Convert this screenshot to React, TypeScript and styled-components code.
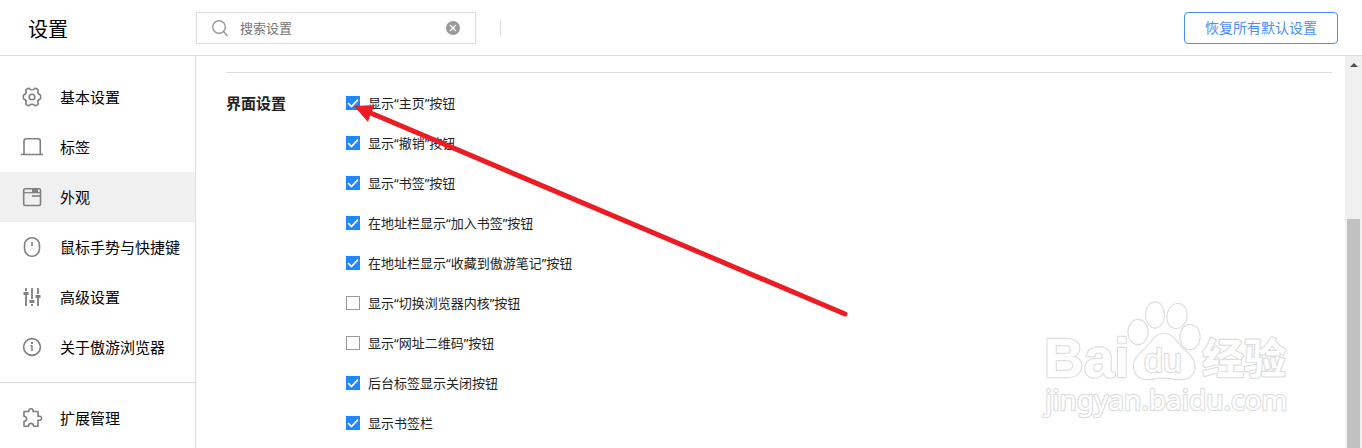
import React from 'react';
import styled, { createGlobalStyle } from 'styled-components';

const Global = createGlobalStyle`
  *, *::before, *::after { box-sizing: border-box; }
  body {
    margin: 0;
    background: #fff;
    color: #222;
    font-family: "Noto Sans", "Noto Sans CJK SC", sans-serif;
  }
  button, input { font: inherit; }
`;

const Page = styled.div`
  position: relative;
  display: flex;
  flex-direction: column;
  height: 100vh;
  overflow: hidden;
`;

const Header = styled.header`
  display: flex;
  align-items: center;
  flex: none;
  height: 56px;
  padding: 0 24px 0 28px;
  border-bottom: 1px solid #dcdcdc;
`;

const Title = styled.h1`
  width: 168px;
  margin: 0;
  padding-top: 4px;
  font-size: 20px;
  line-height: 32px;
  font-weight: 400;
  color: #000;
`;

const Search = styled.div`
  display: flex;
  align-items: center;
  width: 280px;
  height: 32px;
  padding: 0 15px 0 14px;
  border: 1px solid #dcdcdc;
`;

const SearchInput = styled.input`
  flex: 1;
  min-width: 0;
  margin: 0 12px 0 11px;
  padding: 0;
  border: 0;
  outline: 0;
  background: none;
  font-size: 13px;
  line-height: 20px;
  &::placeholder { color: #757575; opacity: 1; }
`;

const ClearButton = styled.button`
  display: flex;
  padding: 0;
  border: 0;
  background: none;
  cursor: pointer;
`;

const Separator = styled.span`
  width: 1px;
  height: 16px;
  margin-left: 24px;
  background: #dcdcdc;
`;

const ResetButton = styled.button`
  width: 154px;
  height: 32px;
  margin-left: auto;
  padding: 0;
  border: 1px solid #4a90f4;
  border-radius: 4px;
  background: #fff;
  color: #4a90f4;
  font-size: 14px;
  line-height: 20px;
  cursor: pointer;
`;

const Body = styled.div`
  display: flex;
  flex: 1;
  min-height: 0;
`;

const Sidebar = styled.nav`
  flex: none;
  width: 196px;
  padding-top: 16px;
  border-right: 1px solid #dcdcdc;
`;

const NavLink = styled.a<{ $active?: boolean }>`
  display: flex;
  align-items: center;
  gap: 16px;
  height: 50px;
  padding-left: 20px;
  background: ${(p) => (p.$active ? '#f0f0f0' : 'transparent')};
  color: #000;
  font-size: 15px;
  line-height: 24px;
  text-decoration: none;
  white-space: nowrap;
`;

const NavDivider = styled.hr`
  margin: 10px 0;
  border: 0;
  border-top: 1px solid #dcdcdc;
`;

const Content = styled.main`
  flex: 1;
  min-width: 0;
  padding: 16px 13px 0 30px;
  overflow: hidden;
`;

const Section = styled.section`
  display: flex;
  padding-top: 10px;
  border-top: 1px solid #dcdcdc;
`;

const SectionTitle = styled.h2`
  width: 120px;
  margin: 0;
  font-size: 15px;
  line-height: 40px;
  font-weight: 700;
`;

const Option = styled.label`
  display: flex;
  align-items: center;
  gap: 8px;
  height: 40px;
  font-size: 13px;
  line-height: 20px;
  white-space: nowrap;
`;

const CheckFrame = styled.span`
  display: grid;
  & > * { grid-area: 1 / 1; }
`;

const CheckInput = styled.input`
  appearance: none;
  width: 14px;
  height: 14px;
  margin: 0;
  border: 1px solid #999;
  background: #fff;
  &:checked { border-color: #1e88ff; background: #1e88ff; }
`;

const CheckMark = styled.svg`
  pointer-events: none;
  z-index: 1;
`;

const ScrollTrack = styled.div`
  display: flex;
  flex-direction: column;
  align-items: center;
  flex: none;
  width: 17px;
  background: #f0f0f0;
`;

const ScrollUp = styled.span`
  display: flex;
  align-items: center;
  height: 18px;
`;

const ScrollGap = styled.span`
  height: 37%;
  flex: none;
`;

const ScrollThumb = styled.span`
  flex: 1;
  width: 13px;
  background: #c1c1c1;
`;

const Pointer = styled.svg`
  position: absolute;
  left: 346px;
  top: 95px;
  pointer-events: none;
`;

const Watermark = styled.svg`
  position: absolute;
  right: 62px;
  bottom: 18px;
  pointer-events: none;
`;

const NavIcon = ({ children }: { children: React.ReactNode }) => (
  <svg width="24" height="24" viewBox="0 0 24 24" fill="none" stroke="#808080" strokeWidth="1.6" aria-hidden="true">
    {children}
  </svg>
);

const icons = {
  basic: (
    <>
      <path d="M6.6 4.1 Q9 2.6 9.8 4.1 Q12 5.4 14.2 4.1 Q15 2.6 17.4 4.1 Q18.8 5 17.8 6.7 Q17.7 9.2 19.7 9.6 Q20.9 10 20.7 12 Q20.9 14 19.7 14.4 Q17.7 14.8 17.8 17.3 Q18.8 19 17.4 19.9 Q15 21.4 14.2 19.9 Q12 18.6 9.8 19.9 Q9 21.4 6.6 19.9 Q5.2 19 6.2 17.3 Q6.3 14.8 4.3 14.4 Q3.1 14 3.3 12 Q3.1 10 4.3 9.6 Q6.3 9.2 6.2 6.7 Q5.2 5 6.6 4.1Z" />
      <circle cx="12" cy="12" r="2.8" />
    </>
  ),
  tabs: <path d="M1 19.5H23M4 19V6Q4 3.7 6.3 3.7H18Q20.3 3.7 20.3 6V19" />,
  look: (
    <>
      <rect x="3.7" y="3.7" width="16.8" height="16.8" rx="1.5" />
      <path d="M4 7.7H21" strokeWidth="1.2" />
      <path d="M12 6H18" strokeWidth="4" />
      <path d="M12 11H20" />
    </>
  ),
  mouse: (
    <>
      <rect x="4.5" y="2.7" width="15" height="18.6" rx="7.5" />
      <path d="M12 7V11" />
    </>
  ),
  advanced: (
    <>
      <path d="M6 3V6M6 10V21M12 3V14M12 19V21M18 3V9M18 13V21" strokeWidth="1.8" />
      <path d="M3.5 8.5H8.5M9.5 16.5H14.5M15.5 11.5H20.5" strokeWidth="3" />
    </>
  ),
  about: (
    <>
      <circle cx="12" cy="12" r="8.4" />
      <path d="M12 10.5V16M10.5 10.7H12" strokeWidth="1.6" />
      <path d="M12 7V9" strokeWidth="2" />
    </>
  ),
  extensions: (
    <path
      strokeLinejoin="round"
      d="M4 5.5H9Q8.2 2.8 11 2.8Q13.8 2.8 13 5.5H18V10.5Q21.5 9.4 21.5 12.3Q21.5 15 18 14V20.3H13.6Q13.4 17.4 11 17.4Q8.6 17.4 8.4 20.3H4V15.4Q6.6 15.2 6.6 12.8Q6.6 10.4 4 10.2Z"
    />
  ),
};

const mainNav = [
  { icon: icons.basic, label: '基本设置' },
  { icon: icons.tabs, label: '标签' },
  { icon: icons.look, label: '外观', active: true },
  { icon: icons.mouse, label: '鼠标手势与快捷键' },
  { icon: icons.advanced, label: '高级设置' },
  { icon: icons.about, label: '关于傲游浏览器' },
];

const options = [
  { label: '显示“主页”按钮', checked: true },
  { label: '显示“撤销”按钮', checked: true },
  { label: '显示“书签”按钮', checked: true },
  { label: '在地址栏显示“加入书签”按钮', checked: true },
  { label: '在地址栏显示“收藏到傲游笔记”按钮', checked: true },
  { label: '显示“切换浏览器内核”按钮', checked: false },
  { label: '显示“网址二维码”按钮', checked: false },
  { label: '后台标签显示关闭按钮', checked: true },
  { label: '显示书签栏', checked: true },
];

const CheckOption = ({ label, checked }: { label: string; checked: boolean }) => (
  <Option>
    <CheckFrame>
      <CheckInput type="checkbox" defaultChecked={checked} />
      <CheckMark width="14" height="14" viewBox="0 0 14 14" fill="none" stroke="#fff" strokeWidth="1.7" aria-hidden="true">
        <path d="M2 7L5.5 10.5L12 3.7" />
      </CheckMark>
    </CheckFrame>
    {label}
  </Option>
);

const BaiduMark = () => (
  <Watermark width="260" height="140" viewBox="1040 290 260 140" aria-hidden="true">
    <g fill="#fff" stroke="#dedede" strokeWidth="2.4" strokeLinejoin="round" paintOrder="stroke">
      <ellipse cx="1138" cy="332" rx="9.5" ry="12" />
      <ellipse cx="1155" cy="315" rx="9" ry="12.5" />
      <ellipse cx="1177" cy="316" rx="9.5" ry="12" transform="rotate(12 1177 316)" />
      <ellipse cx="1190" cy="337" rx="9.5" ry="12" />
      <path d="M1164 334C1174 334 1176 343 1183 349C1190 355 1196 361 1194 370C1192 378 1184 380 1177 379C1168 377 1159 377 1151 379C1142 380 1135 376 1134 368C1133 359 1140 354 1146 348C1152 342 1155 334 1164 334Z" />
      <text x="1044" y="377" fontFamily="Liberation Sans, sans-serif" fontWeight="700" fontSize="55">Bai</text>
      <text x="1144" y="372" fontFamily="Liberation Sans, sans-serif" fontSize="34">du</text>
      <text x="1202" y="374" fontFamily="Noto Sans CJK SC, sans-serif" fontWeight="700" fontSize="42">经验</text>
      <text x="1045" y="410" fontFamily="Noto Sans, sans-serif" fontSize="28">jingyan.baidu.com</text>
    </g>
  </Watermark>
);

export default function App() {
  return (
    <Page>
      <Global />
      <Header>
        <Title>设置</Title>
        <Search>
          <svg width="18" height="18" viewBox="0 0 18 18" fill="none" stroke="#999" strokeWidth="1.4" aria-hidden="true">
            <circle cx="8" cy="8" r="6.3" />
            <path d="M12.5 12.5L16.5 17" />
          </svg>
          <SearchInput type="text" placeholder="搜索设置" aria-label="搜索设置" />
          <ClearButton type="button" aria-label="清除">
            <svg width="14" height="14" viewBox="0 0 14 14" aria-hidden="true">
              <circle cx="7" cy="7" r="7" fill="#999" />
              <path d="M4 4L10 10M10 4L4 10" stroke="#fff" strokeWidth="1.3" />
            </svg>
          </ClearButton>
        </Search>
        <Separator />
        <ResetButton type="button">恢复所有默认设置</ResetButton>
      </Header>
      <Body>
        <Sidebar>
          {mainNav.map((item) => (
            <NavLink key={item.label} href="#" $active={item.active}>
              <NavIcon>{item.icon}</NavIcon>
              {item.label}
            </NavLink>
          ))}
          <NavDivider />
          <NavLink href="#">
            <NavIcon>{icons.extensions}</NavIcon>
            扩展管理
          </NavLink>
        </Sidebar>
        <Content>
          <Section>
            <SectionTitle>界面设置</SectionTitle>
            <div>
              {options.map((o) => (
                <CheckOption key={o.label} {...o} />
              ))}
            </div>
          </Section>
        </Content>
        <ScrollTrack aria-hidden="true">
          <ScrollUp>
            <svg width="8" height="4" viewBox="0 0 8 4"><path d="M4 0L8 4H0Z" fill="#505050" /></svg>
          </ScrollUp>
          <ScrollGap />
          <ScrollThumb />
        </ScrollTrack>
      </Body>
      <Pointer width="510" height="230" viewBox="346 95 510 230" aria-hidden="true">
        <path d="M366 111L845 314" stroke="#ed1c24" strokeWidth="5" strokeLinecap="round" />
        <path d="M354 106L375 105L371 113L368 122Z" fill="#ed1c24" />
      </Pointer>
      <BaiduMark />
    </Page>
  );
}
